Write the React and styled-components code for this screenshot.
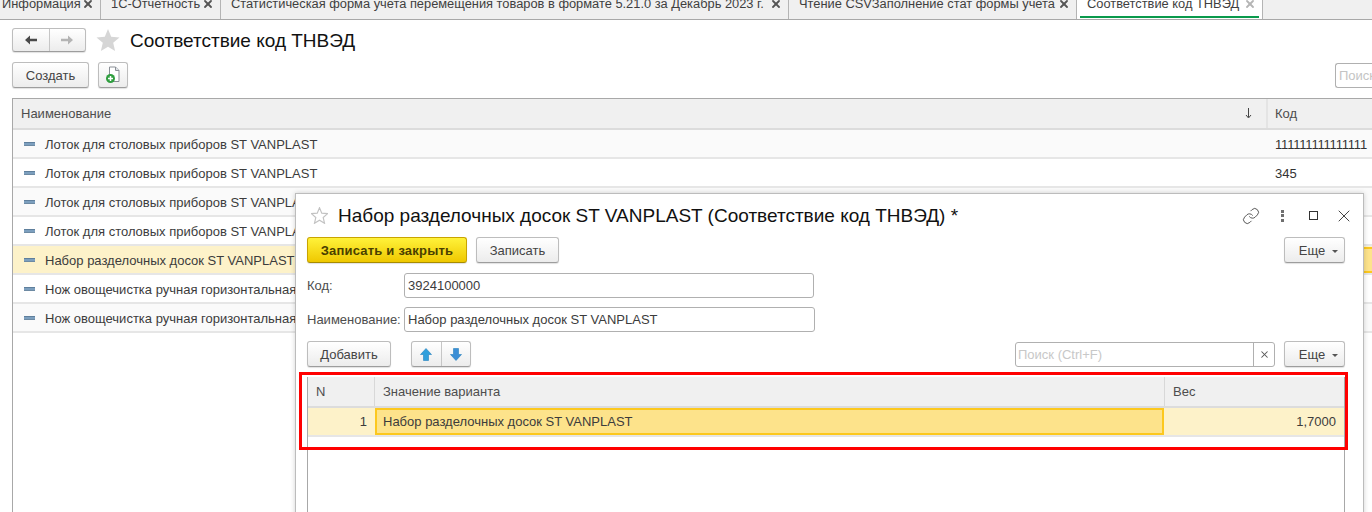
import React from 'react';
import styled, { createGlobalStyle } from 'styled-components';
import { Link, X } from 'lucide-react';

const GlobalStyle = createGlobalStyle`
  html, body {
    margin: 0;
    padding: 0;
    height: 512px;
    overflow: hidden;
    background: #fff;
    font-family: "Liberation Sans", Arial, sans-serif;
    font-size: 13px;
    color: #3a3a3a;
  }
  * { box-sizing: border-box; }
`;

const Page = styled.div`
  position: relative;
  width: 1372px;
  height: 512px;
  overflow: hidden;
`;

const TabBar = styled.div`
  display: flex;
  height: 20px;
  background: #f0f0f0;
  border-bottom: 1px solid #a8a8a8;
`;

const Tab = styled.div`
  position: relative;
  width: ${p => p.$w}px;
  height: 19px;
  flex: none;
  display: flex;
  justify-content: space-between;
  padding: 0 6px 0 ${p => p.$pad || 10}px;
  border-right: 1px solid #b4b4b4;
  background: ${p => (p.$active ? '#fff' : 'transparent')};

  &::after {
    content: '';
    display: ${p => (p.$active ? 'block' : 'none')};
    position: absolute;
    left: 3px;
    right: 3px;
    top: 16px;
    height: 2px;
    background: #0a9a4c;
  }
`;

const TabLabel = styled.span`
  font-size: 12.85px;
  line-height: 7px;
  white-space: nowrap;
  color: #3f3f3f;
`;

const TabClose = styled(X)`
  margin-top: -2px;
  flex: none;
  color: ${p => (p.$active ? '#b5b5b5' : '#555')};
`;

const Content = styled.div`
  padding: 8px 0 0 12px;
`;

const HeadRow = styled.div`
  display: flex;
  align-items: center;
  height: 24px;
`;

const NavGroup = styled.div`
  display: flex;
  width: 74px;
  height: 24px;
  border: 1px solid #bdbdbd;
  border-bottom-color: #9d9d9d;
  border-radius: 3px;
  background: linear-gradient(#fff, #ececec);
  box-shadow: 0 1px 1px rgba(0, 0, 0, 0.12);
`;

const NavCell = styled.div`
  flex: 1;
  display: flex;
  align-items: center;
  justify-content: center;

  & + & {
    border-left: 1px solid #c6c6c6;
  }
`;

const FavStar = styled.svg`
  margin-left: ${p => p.$ml}px;
  flex: none;
`;

const PageTitle = styled.h1`
  margin: 1px 0 0 10px;
  font-size: 19px;
  font-weight: 400;
  color: #111;
  white-space: nowrap;
`;

const CreateRow = styled.div`
  display: flex;
  align-items: center;
  gap: 9px;
  height: 26px;
  margin-top: 10px;
  position: relative;
`;

const Button = styled.div`
  display: flex;
  align-items: center;
  justify-content: center;
  width: ${p => p.$w}px;
  height: 26px;
  flex: none;
  border: 1px solid #bdbdbd;
  border-bottom-color: #9d9d9d;
  border-radius: 3px;
  background: linear-gradient(#fff, #ececec);
  box-shadow: 0 1px 1px rgba(0, 0, 0, 0.12);
  color: #444;
  white-space: nowrap;
`;

const PrimaryButton = styled(Button)`
  border-color: #c9a400;
  border-bottom-color: #a88c00;
  background: linear-gradient(#fff23a, #efc800);
  color: #4a3f00;
  font-weight: 700;
  letter-spacing: 0.2px;
`;

const MoreButton = styled(Button)`
  gap: 7px;
  padding-left: 8px;
  margin-left: ${p => (p.$push ? 'auto' : '0')};
`;

const Caret = styled.span`
  width: 0;
  height: 0;
  margin-top: 2px;
  border-left: 3px solid transparent;
  border-right: 3px solid transparent;
  border-top: 3px solid #555;
`;

const ListSearch = styled.div`
  margin-left: auto;
  width: 37px;
  height: 25px;
  padding-left: 3px;
  border: 1px solid #b0b0b0;
  border-right: none;
  border-radius: 3px 0 0 3px;
  line-height: 23px;
  color: #c4c4c4;
  overflow: hidden;
`;

const ListTable = styled.div`
  height: 414px;
  margin-top: 10px;
  border-top: 1px solid #a8a8a8;
  border-left: 1px solid #a8a8a8;
`;

const ListHeader = styled.div`
  display: grid;
  grid-template-columns: 1253px 1fr;
  height: 31px;
  background: #f0f0f0;
  border-bottom: 2px solid #dcdcdc;
`;

const HeaderCell = styled.div`
  display: flex;
  align-items: center;
  justify-content: space-between;
  padding: 0 14px 0 8px;
  color: #4d4d4d;

  & + & {
    border-left: 2px solid #e4e4e4;
    padding-left: 7px;
  }
`;

const SortArrow = styled.svg`
  flex: none;
`;

const ListRow = styled.div`
  display: grid;
  grid-template-columns: 1253px 1fr;
  align-items: center;
  height: 29px;
  padding-top: 1px;
  border-bottom: 2px solid #e6e6e6;
  background: ${p => (p.$current ? '#fdf2c9' : p.$odd ? '#fafafa' : '#fff')};
`;

const NameCell = styled.div`
  display: flex;
  align-items: center;
  gap: 10px;
  padding-left: 11px;
  white-space: nowrap;
  color: #3c3c3c;
`;

const RowMark = styled.span`
  width: 11px;
  height: 4px;
  flex: none;
  background: #7c9fbe;
  border-top: 1px solid #5f7f9c;
  border-bottom: 1px solid #6d8aa3;
`;

const CodeCell = styled.div`
  padding-left: 9px;
  white-space: nowrap;
  color: #333;
  letter-spacing: ${p => (p.$tight ? '-0.2px' : '0')};
  ${p => p.$focus && `
    align-self: stretch;
    background: #fde38b;
    border-top: 2px solid #fcc81e;
    border-bottom: 2px solid #fcc81e;
  `}
`;

const Dialog = styled.div`
  position: absolute;
  left: 295px;
  top: 193px;
  width: 1069px;
  height: 340px;
  padding: 0 18px 0 11px;
  background: #fff;
  border: 1px solid #bcbcbc;
  box-shadow: 0 0 5px rgba(0, 0, 0, 0.18);
`;

const DialogHead = styled.div`
  display: flex;
  align-items: center;
  height: 43px;
`;

const DialogTitle = styled.h2`
  margin: 0 0 0 10px;
  font-size: 19px;
  font-weight: 400;
  color: #111;
  white-space: nowrap;
`;

const WindowControls = styled.div`
  display: flex;
  align-items: center;
  margin-left: auto;
  margin-right: -9px;
  color: #555;
`;

const Dots = styled.div`
  display: flex;
  flex-direction: column;
  gap: 1.5px;
  margin: 0 25px 0 21px;

  & i {
    display: block;
    width: 3px;
    height: 3px;
    background: #6f6f6f;
  }
`;

const MaximizeBox = styled.div`
  width: 9px;
  height: 9px;
  margin-right: 16px;
  border: 1.5px solid #333;
`;

const ToolRow = styled.div`
  display: flex;
  align-items: center;
  gap: 9px;
  height: 26px;
  margin-top: ${p => p.$top || 0}px;
`;

const FieldRow = styled.div`
  display: flex;
  align-items: center;
  height: 25px;
  margin-top: ${p => p.$top}px;
`;

const FieldLabel = styled.label`
  width: 97px;
  flex: none;
  color: #4d4d4d;
`;

const FieldInput = styled.div`
  width: ${p => p.$w}px;
  height: 25px;
  padding-left: 3px;
  border: 1px solid #b0b0b0;
  border-radius: 3px;
  line-height: 23px;
  color: #3c3c3c;
`;

const ArrowGroup = styled.div`
  display: flex;
  width: 60px;
  height: 26px;
  margin-left: 11px;
  border: 1px solid #bdbdbd;
  border-bottom-color: #9d9d9d;
  border-radius: 3px;
  background: linear-gradient(#fff, #ececec);
  box-shadow: 0 1px 1px rgba(0, 0, 0, 0.12);
`;

const SearchBox = styled.div`
  display: flex;
  width: 260px;
  height: 25px;
  margin-left: auto;
  border: 1px solid #b0b0b0;
  border-radius: 3px;
`;

const SearchText = styled.div`
  flex: 1;
  padding-left: 2px;
  line-height: 23px;
  color: #c8c8c8;
`;

const SearchClear = styled.div`
  display: flex;
  align-items: center;
  justify-content: center;
  width: 21px;
  flex: none;
  border-left: 1px solid #b0b0b0;
  color: #555;
`;

const GridWrap = styled.div`
  position: relative;
  margin-top: 10px;
`;

const Annotation = styled.div`
  position: absolute;
  left: -8px;
  top: -5px;
  width: 1049px;
  height: 78px;
  border: 3px solid #f00;
  pointer-events: none;
`;

const VariantTable = styled.div`
  height: 200px;
  border-left: 1px solid #a8a8a8;
  border-right: 1px solid #a8a8a8;
`;

const VariantHeader = styled.div`
  display: grid;
  grid-template-columns: 67px 790px 1fr;
  height: 31px;
  background: #f0f0f0;
  border-bottom: 2px solid #dcdcdc;
`;

const VariantHead = styled.div`
  display: flex;
  align-items: center;
  padding-left: 8px;
  color: #4d4d4d;
  border-right: ${p => (p.$last ? 'none' : '1px solid #d8d8d8')};
`;

const VariantRow = styled.div`
  display: grid;
  grid-template-columns: 67px 790px 1fr;
  height: 29px;
  background: #fdf2c9;
  border-bottom: 2px solid #e6e6e6;
`;

const VariantCell = styled.div`
  display: flex;
  align-items: center;
  justify-content: ${p => (p.$right ? 'flex-end' : 'flex-start')};
  padding: 0 8px 0 8px;
  color: #3c3c3c;
  ${p => p.$focus && `
    background: #fde38b;
    border: 2px solid #fcc81e;
    padding-left: 6px;
    margin-right: 1px;
  `}
`;

const tabs = [
  { label: 'Информация', w: 101, pad: 2 },
  { label: '1С-Отчетность', w: 120 },
  { label: 'Статистическая форма учета перемещения товаров в формате 5.21.0 за Декабрь 2023 г.', w: 568 },
  { label: 'Чтение CSVЗаполнение стат формы учета', w: 288 },
  { label: 'Соответствие код ТНВЭД', w: 186, active: true },
];

const rows = [
  { name: 'Лоток для столовых приборов ST VANPLAST', code: '111111111111111', tight: true, odd: true },
  { name: 'Лоток для столовых приборов ST VANPLAST', code: '345' },
  { name: 'Лоток для столовых приборов ST VANPLAST', odd: true },
  { name: 'Лоток для столовых приборов ST VANPLAST' },
  { name: 'Набор разделочных досок ST VANPLAST', current: true },
  { name: 'Нож овощечистка ручная горизонтальная' },
  { name: 'Нож овощечистка ручная горизонтальная', odd: true },
];

const NavArrow = ({ dir, color }) => (
  <svg width="14" height="12" viewBox="0 0 14 12">
    <path
      d={dir === 'left' ? 'M1 6 6 1.5V4.7H13V7.3H6V10.5Z' : 'M13 6 8 1.5V4.7H1V7.3H8V10.5Z'}
      fill={color}
    />
  </svg>
);

const BlueArrow = ({ dir }) => (
  <svg width="12" height="13" viewBox="0 0 12 13">
    <path
      d={dir === 'up' ? 'M6 .5 11.5 6.5H8.5V12.5H3.5V6.5H.5Z' : 'M6 12.5 11.5 6.5H8.5V.5H3.5V6.5H.5Z'}
      fill={dir === 'up' ? '#2f9fdc' : '#3c8fd6'}
      stroke="#2480bd"
      strokeWidth=".6"
    />
  </svg>
);

const AddDocIcon = () => (
  <svg width="16" height="18" viewBox="0 0 16 18">
    <path d="M4.5 1H10.5L14 4.5V15.5H4.5Z" fill="#fff" stroke="#8a8f96" />
    <path d="M10.5 1V4.5H14" fill="#dfe3e8" stroke="#8a8f96" />
    <circle cx="5.5" cy="12.5" r="4.5" fill="#2f9e3f" />
    <path d="M5.5 10V15M3 12.5H8" stroke="#fff" strokeWidth="1.5" />
  </svg>
);

const StarIcon = ({ size, outline, ml }) => (
  <FavStar width={size} height={size} viewBox="0 0 24 24" $ml={ml}>
    <path
      d="M12 1 15.2 8.7 23.5 9.4 17.2 14.8 19.1 23 12 18.7 4.9 23 6.8 14.8.5 9.4 8.8 8.7Z"
      fill={outline ? '#fff' : '#d6d6d6'}
      stroke={outline ? '#c2c2c2' : 'none'}
      strokeWidth={outline ? 1.6 : 0}
    />
  </FavStar>
);

const App = () => (
  <Page>
    <GlobalStyle />
    <TabBar>
      {tabs.map(t => (
        <Tab key={t.label} $w={t.w} $pad={t.pad} $active={t.active}>
          <TabLabel>{t.label}</TabLabel>
          <TabClose size={12} strokeWidth={3.6} $active={t.active} />
        </Tab>
      ))}
    </TabBar>

    <Content>
      <HeadRow>
        <NavGroup>
          <NavCell><NavArrow dir="left" color="#4a4a4a" /></NavCell>
          <NavCell><NavArrow dir="right" color="#b4b4b4" /></NavCell>
        </NavGroup>
        <StarIcon size={24} ml={10} />
        <PageTitle>Соответствие код ТНВЭД</PageTitle>
      </HeadRow>

      <CreateRow>
        <Button $w={77}>Создать</Button>
        <Button $w={30}><AddDocIcon /></Button>
        <ListSearch>Поиск</ListSearch>
      </CreateRow>

      <ListTable>
        <ListHeader>
          <HeaderCell>
            Наименование
            <SortArrow width="7" height="11" viewBox="0 0 7 11">
              <path d="M3.5 0V9M1 7 3.5 10 6 7" fill="none" stroke="#444" />
            </SortArrow>
          </HeaderCell>
          <HeaderCell>Код</HeaderCell>
        </ListHeader>
        {rows.map((r, i) => (
          <ListRow key={i} $odd={r.odd} $current={r.current}>
            <NameCell>
              <RowMark />
              {r.name}
            </NameCell>
            <CodeCell $tight={r.tight} $focus={r.current}>{r.code}</CodeCell>
          </ListRow>
        ))}
      </ListTable>
    </Content>

    <Dialog>
      <DialogHead>
        <StarIcon size={17} outline ml={4} />
        <DialogTitle>Набор разделочных досок ST VANPLAST (Соответствие код ТНВЭД) *</DialogTitle>
        <WindowControls>
          <Link size={18} strokeWidth={1.3} />
          <Dots><i /><i /><i /></Dots>
          <MaximizeBox />
          <X size={20} strokeWidth={1.1} color="#333" />
        </WindowControls>
      </DialogHead>

      <ToolRow>
        <PrimaryButton $w={160}>Записать и закрыть</PrimaryButton>
        <Button $w={83}>Записать</Button>
        <MoreButton $w={61} $push>Еще <Caret /></MoreButton>
      </ToolRow>

      <FieldRow $top={10}>
        <FieldLabel>Код:</FieldLabel>
        <FieldInput $w={410}>3924100000</FieldInput>
      </FieldRow>
      <FieldRow $top={9}>
        <FieldLabel>Наименование:</FieldLabel>
        <FieldInput $w={411}>Набор разделочных досок ST VANPLAST</FieldInput>
      </FieldRow>

      <ToolRow $top={9}>
        <Button $w={84}>Добавить</Button>
        <ArrowGroup>
          <NavCell><BlueArrow dir="up" /></NavCell>
          <NavCell><BlueArrow dir="down" /></NavCell>
        </ArrowGroup>
        <SearchBox>
          <SearchText>Поиск (Ctrl+F)</SearchText>
          <SearchClear><X size={11} strokeWidth={2.2} /></SearchClear>
        </SearchBox>
        <MoreButton $w={61}>Еще <Caret /></MoreButton>
      </ToolRow>

      <GridWrap>
        <VariantTable>
          <VariantHeader>
            <VariantHead>N</VariantHead>
            <VariantHead>Значение варианта</VariantHead>
            <VariantHead $last>Вес</VariantHead>
          </VariantHeader>
          <VariantRow>
            <VariantCell $right>1</VariantCell>
            <VariantCell $focus>Набор разделочных досок ST VANPLAST</VariantCell>
            <VariantCell $right>1,7000</VariantCell>
          </VariantRow>
        </VariantTable>
        <Annotation />
      </GridWrap>
    </Dialog>
  </Page>
);

export default App;
